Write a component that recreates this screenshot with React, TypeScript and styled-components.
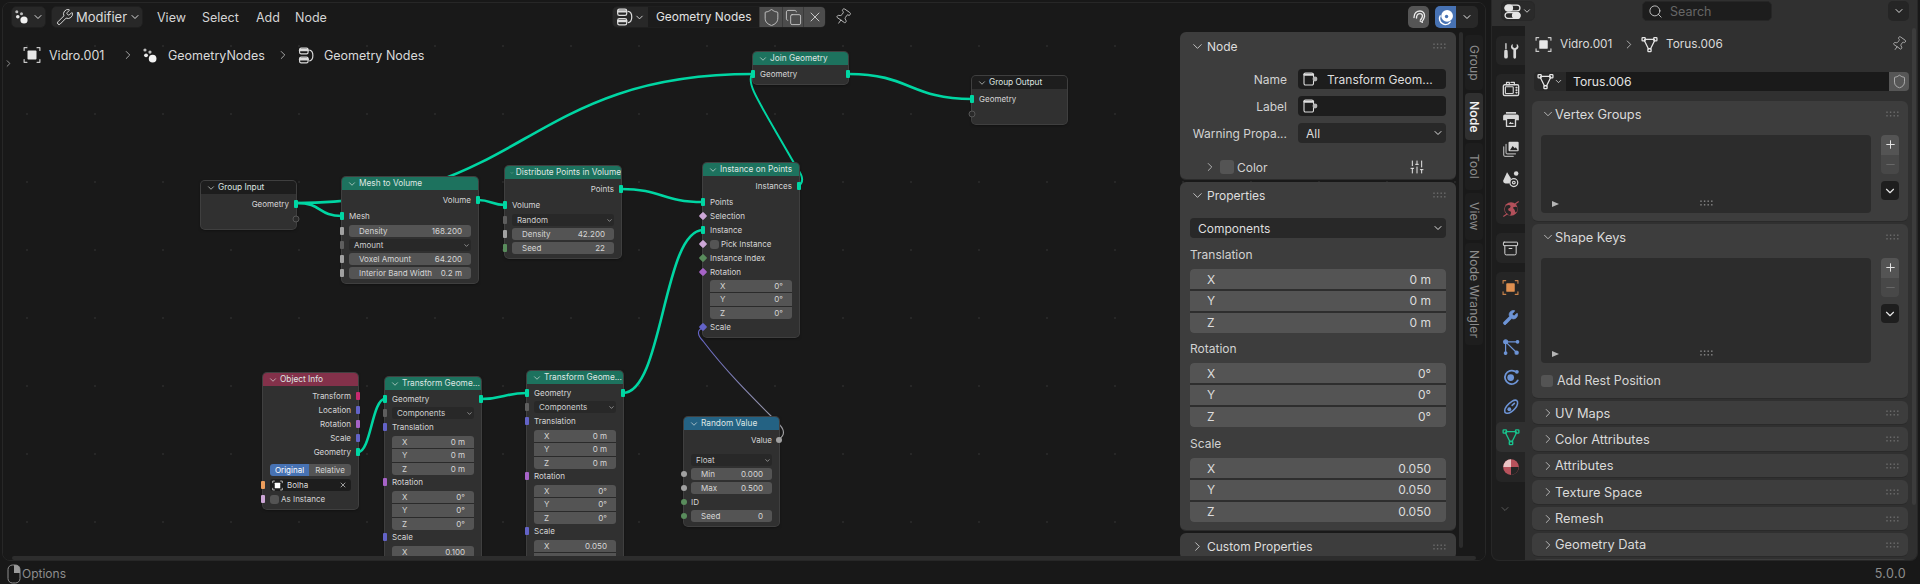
import React from 'react';
import styled, { createGlobalStyle } from 'styled-components';
import { Archive, ChevronDown, ChevronRight, Copy, Minus, Pin, Plus, Search, Shield, SlidersVertical, Wrench, X } from 'lucide-react';

const GlobalStyle = createGlobalStyle`
  html, body { margin: 0; padding: 0; background: #181818; overflow: hidden; }
  * { box-sizing: border-box; }
  #root { width: 1920px; height: 584px; font-family: Inter, "Liberation Sans", sans-serif; }
`;

const GEO = '#00d6a3', GRAY = '#a1a1a1', MENU = '#5e5e5e', INT = '#598c5c', VEC = '#6363c7', ROT = '#a663c7', BOOL = '#cca6d6', OBJ = '#ed9e5c', MATRIX = '#c7296f';
const OX = 3, OY = 3;

/* ---------- page ---------- */
const Page = styled.div`width: 1920px; height: 584px; display: flex; flex-direction: column; background: #181818; color: #d8d8d8; font-size: 12px;`;
const Main = styled.div`height: 561px; display: flex; gap: 5px; padding: 0 2px;`;
const Editor = styled.div`position: relative; width: 1484px; margin-top: 2px; border: 1px solid #272727; border-radius: 8px; overflow: hidden; background: #191919; display: flex; flex-direction: column;`;
const Canvas = styled.div`
  position: absolute; inset: 0; overflow: hidden;
  background-color: #191919;
  background-image: radial-gradient(circle, #272727 0.9px, transparent 1.2px);
  background-size: 68px 68px;
  background-position: -10px 9px;
`;
const Wires = styled.svg`position: absolute; left: 0; top: 0; width: 1484px; height: 560px; overflow: visible;`;
const HScroll = styled.div`position: absolute; left: 9px; right: 9px; bottom: 0; height: 4px; border-radius: 2px; background: #2d2d2d;`;
const SideArrow = styled.div`position: absolute; left: 0; top: 30px; color: #9a9a9a; display: flex;`;

/* ---------- editor header ---------- */
const HeaderBar = styled.div`position: relative; height: 25px; padding: 3px 7px 0 8px; display: flex; align-items: stretch;`;
const LeftGroup = styled.div`width: 601px; display: flex; align-items: center; gap: 5px;`;
const EditorButton = styled.div`
  width: 35px; height: 22px; border-radius: 5px; background: #282828;
  border: 1px solid #1f1f1f; display: flex; align-items: center; justify-content: center; gap: 2px; color: #dcdcdc;
`;
const ModeButton = styled.div`
  width: 92px; height: 22px; border-radius: 5px; background: #282828; padding: 0 1px 0 4px;
  border: 1px solid #1f1f1f; display: flex; align-items: center; justify-content: space-between; color: #dcdcdc; font-size: 13px;
`;
const Menu = styled.div`display: flex; margin-left: 9px; font-size: 12.5px; color: #d4d4d4;`;
const MenuItem = styled.span<{ $w: number }>`display: block; width: ${p => p.$w}px;`;
const DataBlock = styled.div`width: 214px; height: 22px; display: flex; border-radius: 5px; overflow: hidden; border: 1px solid #1f1f1f;`;
const DataIcon = styled.div`width: 35px; background: #282828; display: flex; align-items: center; justify-content: center; gap: 0; color: #dcdcdc;`;
const DataName = styled.div`flex: 1; background: #1c1c1c; padding-left: 8px; font-size: 11.9px; line-height: 20px; color: #e2e2e2; white-space: nowrap;`;
const DataAction = styled.div<{ $w: number }>`width: ${p => p.$w}px; background: #4c4c4c; display: flex; align-items: center; justify-content: center; color: #d0d0d0; border-left: 1px solid #3a3a3a;`;
const PinSlot = styled.div<{ $ml: number }>`margin-left: ${p => p.$ml}px; display: flex; align-items: center; color: #b8b8b8; svg { transform: rotate(35deg); }`;
const RightGroup = styled.div`margin-left: auto; display: flex; align-items: center; gap: 6px;`;
const Joined = styled.div`display: flex; border-radius: 5px; overflow: hidden; height: 22px;`;
const JoinedCell = styled.div<{ $w: number; $bg: string }>`width: ${p => p.$w}px; background: ${p => p.$bg}; display: flex; align-items: center; justify-content: center; color: #e8e8e8;`;

/* ---------- editor body ---------- */
const Body = styled.div`position: relative; flex: 1; display: flex; padding-right: 2px; min-height: 0;`;
const LeftCol = styled.div`flex: 1; padding: 17px 0 0 20px;`;
const Crumbs = styled.div`display: flex; align-items: center; height: 20px; font-size: 12.5px; color: #dadada; white-space: nowrap;`;
const CrumbText = styled.span<{ $w: number }>`display: block; width: ${p => p.$w}px;`;
const CrumbArrow = styled.span<{ $w: number }>`width: ${p => p.$w}px; display: flex; justify-content: center; color: #cfcfcf;`;
const CrumbIcon = styled.span<{ $w: number; $ml?: number }>`width: ${p => p.$w}px; margin-left: ${p => p.$ml ?? 0}px; display: flex;`;
const Sidebar = styled.div`display: flex; padding-top: 4px; height: 100%;`;
const Panels = styled.div`width: 276px; display: flex; flex-direction: column; gap: 2px;`;
const Panel = styled.section<{ $h: number }>`
  background: #3d3d3d; border-radius: 6px; flex: none; height: ${p => p.$h}px;
  padding: 0 10px; border-bottom: 1px solid #2b2b2b;
`;
const PanelHead = styled.div<{ $h: number }>`height: ${p => p.$h}px; display: flex; align-items: center; gap: 2px; font-size: 12px; color: #dedede;`;
const PanelGrip = styled.svg`margin-left: auto; width: 13px; height: 6px; color: #6e6e6e;`;
const ListGrip = styled.svg`width: 13px; height: 6px; color: #8a8a8a;`;
const PropGrid = styled.div`display: grid; grid-template-columns: 97px 148px; column-gap: 11px; row-gap: 7px; margin-top: 9px; align-items: center;`;
const PropLabel = styled.div`font-size: 12px; color: #d2d2d2; text-align: right; white-space: nowrap;`;
const TextField = styled.div`height: 20px; border-radius: 4px; background: #1d1d1d; display: flex; align-items: center; padding: 0 4px; gap: 9px; color: #dedede; font-size: 12px; white-space: nowrap;`;
const SelectField = styled.div<{ $mt?: number }>`height: 20px; margin-top: ${p => p.$mt ?? 0}px; border-radius: 4px; background: #282828; display: flex; align-items: center; justify-content: space-between; padding: 0 2px 0 8px; color: #dedede; font-size: 12px;`;
const ColorRow = styled.div`height: 16px; margin-top: 16px; padding-left: 13px; display: flex; align-items: center; gap: 3px; font-size: 12px; color: #d2d2d2;`;
const CheckBox = styled.span<{ $s: number }>`display: block; width: ${p => p.$s}px; height: ${p => p.$s}px; background: #545454; border-radius: 3px; flex: none;`;
const SliderSlot = styled.span`margin-left: auto; margin-right: 21px; display: flex; color: #e6e6e6;`;
const GroupLabel = styled.div<{ $mt: number }>`height: 14px; line-height: 14px; margin-top: ${p => p.$mt}px; font-size: 12px; color: #d2d2d2;`;
const VecField = styled.div`height: 64px; margin-top: 7px; display: flex; flex-direction: column; gap: 1.5px; border-radius: 4px; overflow: hidden; background: #2e2e2e;`;
const VecRow = styled.div`flex: 1; background: #545454; display: flex; align-items: center; justify-content: space-between; padding: 0 15px 0 17px; font-size: 12px; color: #dcdcdc;`;
const VScroll = styled.div<{ $h: number }>`width: 4px; height: ${p => p.$h}px; margin-left: 3px; border-radius: 2px; background: #2c2c2c;`;
const Tabs = styled.div`width: 18px; margin-left: 2px; display: flex; flex-direction: column; gap: 3px; padding-top: 3px;`;
const Tab = styled.div<{ $h: number; $on?: boolean }>`
  height: ${p => p.$h}px; border-radius: 4px; background: ${p => (p.$on ? '#303030' : '#1e1e1e')};
  writing-mode: vertical-rl; display: flex; align-items: center; justify-content: center;
  font-size: 12px; letter-spacing: .2px; white-space: nowrap; color: ${p => (p.$on ? '#f0f0f0' : '#8c8c8c')}; font-weight: ${p => (p.$on ? 600 : 400)};
`;

/* ---------- nodes ---------- */
const NodeBox = styled.div<{ $x: number; $y: number; $w: number }>`
  position: absolute; left: ${p => p.$x - OX}px; top: ${p => p.$y - OY}px; width: ${p => p.$w}px;
  background: #303030; border-radius: 4px; box-shadow: 0 0 0 1px #3f3f3f, 0 1px 3px rgba(0,0,0,.6);
  padding-bottom: 3px; font-size: 8px; color: #d6d6d6; line-height: 1;
`;
const NodeHead = styled.div<{ $c: string }>`
  height: 13px; margin-bottom: 3px; background: ${p => p.$c}; border-radius: 4px 4px 0 0; display: flex; align-items: center;
  gap: 2px; padding-left: 5px; color: #dfe6e3; white-space: nowrap; overflow: hidden; font-size: 8.3px;
`;
const Row = styled.div<{ $end?: boolean; $mt?: number }>`
  position: relative; height: 14px; margin-top: ${p => p.$mt ?? 0}px; padding: 0 7px; display: flex; align-items: center;
  justify-content: ${p => (p.$end ? 'flex-end' : 'flex-start')}; white-space: nowrap;
`;
const Socket = styled.i<{ $side: 'l' | 'r'; $shape: string; $c: string }>`
  position: absolute; top: 50%; ${p => (p.$side === 'l' ? 'left: 0;' : 'right: 0;')}
  width: ${p => (p.$shape === 'bar' ? 4 : p.$shape === 'ghost' ? 7 : 6)}px; height: ${p => (p.$shape === 'bar' ? 8 : p.$shape === 'ghost' ? 7 : 6)}px;
  transform: translate(${p => (p.$side === 'l' ? '-50%' : '50%')}, -50%) ${p => (p.$shape === 'dia' ? 'rotate(45deg)' : '')};
  background: ${p => (p.$shape === 'ghost' ? '#2a2a2a' : p.$c)};
  border-radius: ${p => (p.$shape === 'dot' || p.$shape === 'ghost' ? '50%' : '1px')};
  ${p => (p.$shape === 'ghost' ? 'border: 1px solid #555;' : '')}
`;
const NumField = styled.div`flex: 1; height: 12px; background: #545454; border-radius: 3px; display: flex; align-items: center; justify-content: space-between; padding: 0 9px 0 10px;`;
const MenuField = styled.div`flex: 1; height: 12px; background: #282828; border-radius: 3px; display: flex; align-items: center; justify-content: space-between; padding: 0 1px 0 5px; color: #cfcfcf;`;
const NodeVec = styled.div<{ $mt: number }>`margin: ${p => p.$mt}px 7px 0; display: flex; flex-direction: column; gap: 1px; background: #2a2a2a; border-radius: 3px; overflow: hidden;`;
const NodeVecRow = styled.div`height: 12.33px; background: #545454; display: flex; align-items: center; justify-content: space-between; padding: 0 9px 0 10px;`;
const Seg = styled.div`flex: 1; height: 12px; display: flex; border-radius: 3px; overflow: hidden;`;
const SegCell = styled.div<{ $on?: boolean }>`flex: ${p => (p.$on ? 39 : 42)}; background: ${p => (p.$on ? '#4772b3' : '#545454')}; display: flex; align-items: center; justify-content: center; color: ${p => (p.$on ? '#ffffff' : '#d6d6d6')};`;
const ObjField = styled.div`flex: 1; height: 12px; background: #1d1d1d; border-radius: 3px; display: flex; align-items: center; padding: 0 4px 0 2px; gap: 4px; color: #dedede;`;
const ObjClear = styled.span`margin-left: auto; display: flex;`;
const CheckLabel = styled.span`display: flex; align-items: center; gap: 2px;`;

/* ---------- properties editor ---------- */
const PropsEditor = styled.div`width: 427px; border: 1px solid #272727; border-top: none; border-radius: 0 0 8px 8px; overflow: hidden; background: #303030; display: flex; flex-direction: column; position: relative;`;
const PropsHeader = styled.div`height: 26px; flex: none; background: #303030; display: flex; align-items: center; padding: 0 8px 4px 9px;`;
const Switcher = styled.div`width: 34px; height: 20px; border-radius: 5px; background: #2a2a2a; border: 1px solid #282828; display: flex; align-items: center; justify-content: center; gap: 1px; color: #e6e6e6;`;
const SearchBox = styled.div`width: 130px; height: 20px; margin-left: 107px; border-radius: 5px; background: #1d1d1d; display: flex; align-items: center; gap: 7px; padding-left: 5px; font-size: 12.5px; color: #666; border: 1px solid #262626; svg { color: #d0d0d0; }`;
const PopBtn = styled.div`width: 21px; height: 20px; margin-left: auto; border-radius: 5px; background: #252525; display: flex; align-items: center; justify-content: center; color: #dcdcdc;`;
const PropsBody = styled.div`flex: 1; display: flex; min-height: 0;`;
const TabCol = styled.div`width: 33px; background: #1d1d1d; padding: 10px 0 0 4px; display: flex; flex-direction: column; gap: 9px;`;
const TabGroup = styled.div`background: #252525; border-radius: 5px 0 0 5px; display: flex; flex-direction: column;`;
const PropTab = styled.div<{ $h: number; $c: string; $on?: boolean }>`height: ${p => p.$h}px; display: flex; align-items: center; justify-content: center; color: ${p => p.$c}; background: ${p => (p.$on ? '#303030' : 'transparent')}; border-radius: 5px 0 0 5px;`;
const TabMore = styled.div`margin: 12px 0 0 3px; color: #5a5a5a; display: flex;`;
const PropsMain = styled.div`flex: 1; position: relative; padding: 8px 9px 0 7px; min-width: 0;`;
const PropsCrumbs = styled.div`height: 20px; display: flex; align-items: center; padding-left: 3px; font-size: 11.8px; color: #dadada;`;
const CrumbPin = styled.span`margin-left: auto; margin-right: 1px; display: flex; color: #b8b8b8; svg { transform: rotate(35deg); }`;
const NameBar = styled.div`height: 19px; margin: 18px -1px 0 2px; display: flex; border-radius: 4px; overflow: hidden;`;
const NameIcon = styled.div`width: 32px; background: #282828; display: flex; align-items: center; justify-content: center; color: #e6e6e6;`;
const NameField = styled.div`flex: 1; background: #1a1a1a; padding-left: 7px; font-size: 12.2px; line-height: 19px; color: #e2e2e2;`;
const NameShield = styled.div`width: 20px; background: #565656; display: flex; align-items: center; justify-content: center; color: #c6c6c6;`;
const PanelStack = styled.div`margin-top: 10px; display: flex; flex-direction: column; gap: 2px;`;
const DataPanel = styled.section<{ $h: number }>`height: ${p => p.$h}px; flex: none; background: #3d3d3d; border-radius: 6px; padding: 0 9px; border-bottom: 1px solid #2a2a2a; overflow: hidden;`;
const DataPanelHead = styled.div<{ $h: number }>`height: ${p => p.$h}px; display: flex; align-items: center; gap: 0; font-size: 12.8px; color: #dadada;`;
const ListWrap = styled.div`display: flex; gap: 10px; margin-top: 8px;`;
const ListBox = styled.div<{ $h: number }>`position: relative; width: 331px; height: ${p => p.$h}px; border-radius: 4px; background: #2c2c2c; display: flex; align-items: flex-end; justify-content: center; padding-bottom: 7px;`;
const ListTriangle = styled.span`position: absolute; left: 11px; bottom: 6px; width: 0; height: 0; border-left: 7px solid #b5b5b5; border-top: 3.5px solid transparent; border-bottom: 3.5px solid transparent;`;
const ListSide = styled.div`width: 18px; display: flex; flex-direction: column;`;
const ListBtn = styled.div<{ $dim?: boolean }>`height: 19.5px; background: ${p => (p.$dim ? '#484848' : '#545454')}; color: ${p => (p.$dim ? '#686868' : '#e6e6e6')}; display: flex; align-items: center; justify-content: center; border-radius: ${p => (p.$dim ? '0 0 4px 4px' : '4px 4px 0 0')};`;
const ListMenu = styled.div`height: 19px; margin-top: 7px; background: #1e1e1e; border-radius: 4px; display: flex; align-items: center; justify-content: center; color: #e6e6e6;`;
const RestRow = styled.div`margin-top: 10px; display: flex; align-items: center; gap: 4px; font-size: 12.5px; color: #d6d6d6;`;
const PScroll = styled.div`position: absolute; top: 2px; right: 1px; width: 4px; height: 477px; border-radius: 2px; background: #3c3c3c;`;

/* ---------- status ---------- */
const Status = styled.div`height: 23px; display: flex; align-items: center; justify-content: space-between; padding: 2px 14px 0 7px; font-size: 12px; color: #8e8e8e;`;
const StatusHint = styled.div`display: flex; align-items: center; gap: 1px;`;
const Version = styled.span`font-size: 12.5px; letter-spacing: .4px;`;

/* ---------- icons ---------- */
const Svg: React.FC<{ s?: number; children: React.ReactNode }> = ({ s = 16, children }) => (
  <svg width={s} height={s} viewBox="0 0 16 16" fill="none" stroke="currentColor" strokeWidth="1.1" strokeLinecap="round" strokeLinejoin="round">{children}</svg>
);
const GeoIcon: React.FC<{ s?: number }> = ({ s }) => (
  <Svg s={s}><g stroke="none"><circle cx="2.8" cy="2.8" r="1.5" fill="#bdbdbd" /><circle cx="7.5" cy="4.8" r="1.5" fill="#bdbdbd" /><circle cx="3.8" cy="7.8" r="1.8" fill="#e8e8e8" /><circle cx="10" cy="11" r="3.6" fill="#f2f2f2" /></g></Svg>
);
const ObjectIcon: React.FC<{ s?: number; c?: string }> = ({ s, c = '#e6e6e6' }) => (
  <Svg s={s}><g stroke={c} opacity=".85"><path d="M1 4V1.5h2.5M12.5 1.5H15V4M15 12v2.5h-2.5M3.5 14.5H1V12" /></g><rect x="4" y="4" width="8" height="8" rx=".8" fill={c} stroke="none" /></Svg>
);
const TreeIcon: React.FC<{ s?: number }> = ({ s }) => (
  <Svg s={s}><rect x="1.5" y="1" width="8" height="5.5" rx="1.5" /><path d="M2 3h7" strokeWidth="2.2" /><rect x="1.5" y="9.5" width="8" height="5.5" rx="1.5" /><path d="M2 11.5h7" strokeWidth="2.2" /><path d="M11 3c4 1 4 9 0 10" /></Svg>
);
const MeshIcon: React.FC<{ s?: number; c?: string }> = ({ s, c = '#e6e6e6' }) => (
  <Svg s={s}><g stroke={c} strokeWidth="1.2"><path d="M3.5 3.2h9M3 4l4.2 8.4M13 4l-4.2 8.4" /><rect x="1" y="1.6" width="3" height="3" rx=".6" /><rect x="12" y="1.6" width="3" height="3" rx=".6" /><rect x="6.5" y="11.8" width="3" height="3" rx=".6" /></g></Svg>
);
const NodeNameIcon: React.FC = () => (
  <Svg s={16}><path d="M10 2H3.5A1.5 1.5 0 0 0 2 3.5v9A1.5 1.5 0 0 0 3.5 14H10a1.5 1.5 0 0 0 1.5-1.5V4A2 2 0 0 0 10 2z" /><path d="M2.4 3.6h8.7" strokeWidth="2.2" /><circle cx="13" cy="8" r="2.4" fill="#b4b4b4" stroke="none" /></Svg>
);
const HookIcon: React.FC = () => (
  <Svg s={16}><path d="M3 8.5C3 4 6 2 9 2s5 2.5 4.5 5.5c-.3 2-1.3 3.4-2.3 4.8" strokeWidth="1.4" /><path d="M5.5 9C5.5 6 7 4.6 9 4.6s2.7 1.6 2.3 3.3c-.3 1.2-1 2-1.8 3.1" strokeWidth="1.4" /><path d="M9 12l2.5 1.5" /></Svg>
);
const OverlayIcon: React.FC = () => (
  <Svg s={17}><circle cx="9.5" cy="6.5" r="5.5" fill="#fff" stroke="none" /><circle cx="9" cy="7" r="1.6" fill="#4772b3" stroke="none" /><path d="M3 6.5a5.4 5.4 0 0 0 2.2 7.3 5.4 5.4 0 0 0 7.2-1.5" stroke="#fff" strokeWidth="1.4" /></Svg>
);
const ToggleIcon: React.FC = () => (
  <Svg s={17}><g strokeWidth="1.2"><rect x="1" y="2" width="14" height="5.4" rx="2.7" /><rect x="1" y="9" width="14" height="5.4" rx="2.7" /><rect x="1" y="2" width="7" height="5.4" rx="2.7" fill="currentColor" /><rect x="8" y="9" width="7" height="5.4" rx="2.7" fill="currentColor" /></g></Svg>
);
const MouseIcon: React.FC = () => (
  <svg width="14" height="20" viewBox="0 0 14 20" fill="none" stroke="#8e8e8e" strokeWidth="1"><rect x="1" y="1" width="12" height="18" rx="4.5" /><path d="M7 1h1.5A4.5 4.5 0 0 1 13 5.5V9H7z" fill="#9a9a9a" stroke="none" /></svg>
);
const GripDots = () => <g>{[1, 4.6, 8.2, 11.8].flatMap(x => [1.2, 4.8].map(y => <rect key={`${x}${y}`} x={x - .7} y={y - .7} width="1.4" height="1.4" />))}</g>;
const Grip: React.FC = () => <PanelGrip viewBox="0 0 13 6" fill="currentColor"><GripDots /></PanelGrip>;
const ListHandle: React.FC = () => <ListGrip viewBox="0 0 13 6" fill="currentColor"><GripDots /></ListGrip>;
const ToolTabIcon = () => (<Svg s={18}><path d="M3.5 1.5v4.2" strokeWidth="1.2" /><path d="M2 8.2a1.5 1.5 0 0 1 3 0l.2 4.8a1.6 1.6 0 0 1-3.3 0z" fill="currentColor" stroke="none" /><path d="M9.5 1.8v2.6l1.8 1.2 1.8-1.2V1.8c1.5.8 2 2.5 1.2 3.8-.4.7-1 1.1-1.8 1.3v6.7a1.2 1.2 0 0 1-2.4 0V6.9c-.8-.2-1.4-.6-1.8-1.3-.7-1.3-.2-3 1.2-3.8z" fill="currentColor" stroke="none" /></Svg>);
const RenderTabIcon = () => (<Svg s={18}><rect x="1.2" y="4.2" width="13.6" height="9.6" rx="1.2" strokeWidth="1.2" /><rect x="3" y="6" width="7" height="6" rx=".6" strokeWidth="1" /><path d="M4 2.2h2.5v2H4zM8 2.2h3v2" /><path d="M12.6 6.8h.6M12.6 9h.6M12.6 11.2h.6" strokeWidth="1.4" /></Svg>);
const OutputTabIcon = () => (<Svg s={18}><path d="M1 5.5A1.5 1.5 0 0 1 2.5 4h11A1.5 1.5 0 0 1 15 5.5V9H1z" fill="currentColor" stroke="none" /><rect x="3.5" y="1.8" width="9" height="1.5" fill="currentColor" stroke="none" /><rect x="4" y="7.5" width="8" height="7" fill="#252525" strokeWidth="1.2" /><path d="M6 12.5l1.5-2 1.3 1.3.7-.8 1 1.5z" fill="currentColor" stroke="none" /></Svg>);
const LayerTabIcon = () => (<Svg s={18}><path d="M1.5 6v7.2A1.3 1.3 0 0 0 2.8 14.5H10M3.6 3.8V11a1.3 1.3 0 0 0 1.3 1.3H12" opacity=".75" /><rect x="5.8" y="1.5" width="9" height="8.6" rx="1" fill="currentColor" stroke="none" /><path d="M7 9l2.5-3.6 1.8 2 1-1L14 9z" fill="#252525" stroke="none" /></Svg>);
const SceneTabIcon = () => (<Svg s={18}><path d="M4.5 2L1 9.5C1 11.5 2.5 12 4.5 12c1.2 0 1.8-.2 2.4-.5L8 7.5z" fill="currentColor" stroke="none" /><circle cx="12.6" cy="3.2" r="2" fill="currentColor" stroke="none" /><circle cx="10.5" cy="11.2" r="3.5" strokeWidth="1.1" /><circle cx="10.5" cy="11.2" r="1.2" /></Svg>);
const WorldTabIcon = () => (<Svg s={18}><circle cx="8" cy="8" r="6" fill="#b2505a" stroke="none" /><path d="M3.5 5.2C6 3.8 8 4.4 7.5 6.2c-.3 1.2-2 .8-2 2.2s2 1.2 2.4 2.2c.3.9-.2 2.2-.9 3.1C4.8 12.8 2.8 11 2.6 8.8 2.5 7.5 2.8 6.2 3.5 5.2zM10 6.5c1-.8 3-.9 3.8.3.2 1.8-.4 3.4-1.5 4.4-1-.6-.5-2-1.2-2.6-.6-.6-1.6-1.3-1.1-2.1z" fill="#252525" stroke="none" /><path d="M1.5 14.5l3-2M14.5 1.5l-3 2" stroke="#b2505a" strokeWidth="1" /></Svg>);
const ParticleTabIcon = () => (<Svg s={18}><g stroke="#6d94d6"><circle cx="3.2" cy="3.4" r="1.7" fill="#6d94d6" /><circle cx="13.8" cy="3.4" r="1.1" fill="#6d94d6" /><circle cx="3.2" cy="13.4" r="1.1" fill="#6d94d6" /><circle cx="13" cy="13" r="1.4" fill="#6d94d6" /><path d="M5 3.4h7.5M3.2 5v7.2M4.6 4.8l7.4 7.2" /></g></Svg>);
const PhysicsTabIcon = () => (<Svg s={18}><g stroke="#6d94d6"><path d="M11.5 3A6 6 0 1 0 14 11" strokeWidth="1.6" /><circle cx="7.7" cy="8.5" r="3" fill="#6d94d6" stroke="none" /><circle cx="13.2" cy="3.4" r="1.7" fill="#6d94d6" stroke="none" /></g></Svg>);
const ConstraintTabIcon = () => (<Svg s={18}><g stroke="#6d94d6" strokeWidth="1.4"><path d="M13 2.2c1.6 1.2 1 4.4-1.4 7.2-2.6 3-6 4.6-8 4-1.8-.6-1.6-3.4.6-6.2C6.8 4 11 1 13 2.2z" /><circle cx="6.5" cy="10" r="1.7" fill="#6d94d6" stroke="none" /><path d="M9 6.6l2-1.8" /></g></Svg>);
const MaterialTabIcon = () => (<Svg s={18}><circle cx="8" cy="8" r="7" fill="#b8525c" stroke="none" /><path d="M1.2 8H8V1.1A6.9 6.9 0 0 0 1.2 8z" fill="#f0d0d0" stroke="none" opacity=".9" /><path d="M8 8h6.8A6.9 6.9 0 0 1 8 15z" fill="#252525" stroke="none" /></Svg>);

/* ---------- node data ---------- */
type Sock = { side: 'l' | 'r'; shape: 'bar' | 'dot' | 'dia' | 'ghost'; c: string };
type RowDef =
  | { t: 'out' | 'in'; label: string; s?: Sock[]; mt?: number }
  | { t: 'ghost'; side: 'l' | 'r' }
  | { t: 'num'; label: string; value: string; s?: Sock[]; mt?: number }
  | { t: 'menu'; label: string; s?: Sock[]; mt?: number }
  | { t: 'vec'; v: string[]; mt: number }
  | { t: 'seg'; mt: number }
  | { t: 'obj'; s?: Sock[]; mt?: number }
  | { t: 'check'; label: string; s?: Sock[] };

const L = (c: string, shape: Sock['shape'] = 'bar'): Sock => ({ side: 'l', shape, c });
const R = (c: string, shape: Sock['shape'] = 'bar'): Sock => ({ side: 'r', shape, c });

type NodeDef = { title: string; c: string; x: number; y: number; w: number; rows: RowDef[] };
const GREEN = '#1d725e', DARK = '#1d1d1d';
const transformRows = (scale: string[]): RowDef[] => [
  { t: 'in', label: 'Geometry', s: [L(GEO), R(GEO)], mt: -1 },
  { t: 'menu', label: 'Components', s: [L(MENU)] },
  { t: 'in', label: 'Translation', s: [L(VEC)] },
  { t: 'vec', v: ['0 m', '0 m', '0 m'], mt: 2 },
  { t: 'in', label: 'Rotation', s: [L(ROT)] },
  { t: 'vec', v: ['0°', '0°', '0°'], mt: 2 },
  { t: 'in', label: 'Scale', s: [L(VEC)] },
  { t: 'vec', v: scale, mt: 2 },
];
const NODES: NodeDef[] = [
  { title: 'Group Input', c: DARK, x: 201, y: 181, w: 95, rows: [
    { t: 'out', label: 'Geometry', s: [R(GEO)] }, { t: 'ghost', side: 'r' } ] },
  { title: 'Mesh to Volume', c: GREEN, x: 342, y: 177, w: 136, rows: [
    { t: 'out', label: 'Volume', s: [R(GEO)] },
    { t: 'in', label: 'Mesh', s: [L(GEO)], mt: 2 },
    { t: 'num', label: 'Density', value: '168.200', s: [L(GRAY)], mt: 1 },
    { t: 'menu', label: 'Amount', s: [L(MENU)] },
    { t: 'num', label: 'Voxel Amount', value: '64.200', s: [L(GRAY)] },
    { t: 'num', label: 'Interior Band Width', value: '0.2 m', s: [L(GRAY)] } ] },
  { title: 'Distribute Points in Volume', c: GREEN, x: 505, y: 166, w: 116, rows: [
    { t: 'out', label: 'Points', s: [R(GEO)] },
    { t: 'in', label: 'Volume', s: [L(GEO)], mt: 2 },
    { t: 'menu', label: 'Random', s: [L(MENU)], mt: 1 },
    { t: 'num', label: 'Density', value: '42.200', s: [L(GRAY)] },
    { t: 'num', label: 'Seed', value: '22', s: [L(INT)] } ] },
  { title: 'Join Geometry', c: GREEN, x: 753, y: 52, w: 95, rows: [
    { t: 'in', label: 'Geometry', s: [L(GEO), R(GEO)], mt: -1 } ] },
  { title: 'Group Output', c: DARK, x: 972, y: 76, w: 95, rows: [
    { t: 'in', label: 'Geometry', s: [L(GEO)] }, { t: 'ghost', side: 'l' } ] },
  { title: 'Instance on Points', c: GREEN, x: 703, y: 163, w: 96, rows: [
    { t: 'out', label: 'Instances', s: [R(GEO)] },
    { t: 'in', label: 'Points', s: [L(GEO)], mt: 2 },
    { t: 'in', label: 'Selection', s: [L(BOOL, 'dia')] },
    { t: 'in', label: 'Instance', s: [L(GEO)] },
    { t: 'check', label: 'Pick Instance', s: [L(BOOL, 'dia')] },
    { t: 'in', label: 'Instance Index', s: [L(INT, 'dia')] },
    { t: 'in', label: 'Rotation', s: [L(ROT, 'dia')] },
    { t: 'vec', v: ['0°', '0°', '0°'], mt: 1 },
    { t: 'in', label: 'Scale', s: [L(VEC, 'dia')], mt: 1 } ] },
  { title: 'Random Value', c: '#246283', x: 684, y: 417, w: 95, rows: [
    { t: 'out', label: 'Value', s: [R(GRAY, 'dot')] },
    { t: 'menu', label: 'Float', mt: 6 },
    { t: 'num', label: 'Min', value: '0.000', s: [L(GRAY, 'dot')] },
    { t: 'num', label: 'Max', value: '0.500', s: [L(GRAY, 'dot')] },
    { t: 'in', label: 'ID', s: [L(INT, 'dot')] },
    { t: 'num', label: 'Seed', value: '0', s: [L(INT, 'dot')] } ] },
  { title: 'Object Info', c: '#83314a', x: 263, y: 373, w: 95, rows: [
    { t: 'out', label: 'Transform', s: [R(MATRIX)] },
    { t: 'out', label: 'Location', s: [R(VEC)] },
    { t: 'out', label: 'Rotation', s: [R(ROT)] },
    { t: 'out', label: 'Scale', s: [R(VEC)] },
    { t: 'out', label: 'Geometry', s: [R(GEO)] },
    { t: 'seg', mt: 4 },
    { t: 'obj', s: [L(OBJ)], mt: 1 },
    { t: 'check', label: 'As Instance', s: [L(BOOL)] } ] },
  { title: 'Transform Geome...', c: GREEN, x: 385, y: 377, w: 96, rows: transformRows(['0.100']) },
  { title: 'Transform Geome...', c: GREEN, x: 527, y: 371, w: 96, rows: transformRows(['0.050', '0.050']) },
];

const Sockets: React.FC<{ s?: Sock[] }> = ({ s }) => <>{s?.map((k, i) => <Socket key={i} $side={k.side} $shape={k.shape} $c={k.c} />)}</>;
const AXES = ['X', 'Y', 'Z'];

const NodeRow: React.FC<{ r: RowDef }> = ({ r }) => {
  switch (r.t) {
    case 'out': return <Row $end $mt={r.mt}>{r.label}<Sockets s={r.s} /></Row>;
    case 'in': return <Row $mt={r.mt}>{r.label}<Sockets s={r.s} /></Row>;
    case 'ghost': return <Row $mt={1}><Socket $side={r.side} $shape="ghost" $c="" /></Row>;
    case 'num': return <Row $mt={r.mt}><NumField><span>{r.label}</span><span>{r.value}</span></NumField><Sockets s={r.s} /></Row>;
    case 'menu': return <Row $mt={r.mt}><MenuField><span>{r.label}</span><ChevronDown size={7} strokeWidth={2} /></MenuField><Sockets s={r.s} /></Row>;
    case 'vec': return <NodeVec $mt={r.mt}>{r.v.map((v, i) => <NodeVecRow key={i}><span>{AXES[i]}</span><span>{v}</span></NodeVecRow>)}</NodeVec>;
    case 'seg': return <Row $mt={r.mt}><Seg><SegCell $on>Original</SegCell><SegCell>Relative</SegCell></Seg></Row>;
    case 'obj': return <Row $mt={r.mt}><ObjField><ObjectIcon s={11} c="#ffffff" /><span>Bolha</span><ObjClear><X size={8} /></ObjClear></ObjField><Sockets s={r.s} /></Row>;
    case 'check': return <Row><CheckLabel><CheckBox $s={9} />{r.label}</CheckLabel><Sockets s={r.s} /></Row>;
  }
};

const GraphNode: React.FC<{ n: NodeDef }> = ({ n }) => (
  <NodeBox $x={n.x} $y={n.y} $w={n.w}>
    <NodeHead $c={n.c}><ChevronDown size={10} strokeWidth={1.6} />{n.title}</NodeHead>
    {n.rows.map((r, i) => <NodeRow key={i} r={r} />)}
  </NodeBox>
);

const LINKS = [
  'M297 203C525 203 525 74 753 74',
  'M297 203C322 203 318 216 342 216',
  'M478 200C491 200 492 205 505 205',
  'M621 189C662 189 662 202 703 202',
  'M849 74C910 74 910 99 972 99',
  'M623 393C663 393 663 230 703 230',
  'M358 452C371 452 372 399 385 399',
  'M481 399C504 399 504 393 527 393',
];

const VecBlock: React.FC<{ v: string[] }> = ({ v }) => (
  <VecField>{v.map((val, i) => <VecRow key={i}><span>{AXES[i]}</span><span>{val}</span></VecRow>)}</VecField>
);

const COLLAPSED = ['UV Maps', 'Color Attributes', 'Attributes', 'Texture Space', 'Remesh', 'Geometry Data'];

export default function App() {
  return (
    <Page>
      <GlobalStyle />
      <Main>
        <Editor>
          <Canvas>
            <Wires>
              <defs>
                <linearGradient id="val" gradientUnits="userSpaceOnUse" x1="703" y1="328" x2="779" y2="439">
                  <stop offset="0" stopColor="#6363c7" />
                  <stop offset="1" stopColor="#a1a1a1" />
                </linearGradient>
              </defs>
              <g transform={`translate(${-OX} ${-OY})`} fill="none">
                {LINKS.map(d => <path key={d} d={d} stroke={GEO} strokeWidth="2.6" />)}
                <path d="M752 74C746 84 758 100 794 163C800 172 806 180 799 186" stroke={GEO} strokeWidth="2" />
                <path d="M703 328C696 330 698 336 703 341C725 370 750 395 772 417C778 423 790 432 779 439" stroke="url(#val)" strokeWidth="1.1" />
              </g>
            </Wires>
            {NODES.map((n, i) => <GraphNode key={i} n={n} />)}
          </Canvas>
          <HeaderBar>
            <LeftGroup>
              <EditorButton><GeoIcon s={16} /><ChevronDown size={12} /></EditorButton>
              <ModeButton><Wrench size={18} strokeWidth={1.3} />Modifier<ChevronDown size={12} /></ModeButton>
              <Menu>
                <MenuItem $w={45}>View</MenuItem>
                <MenuItem $w={54}>Select</MenuItem>
                <MenuItem $w={39}>Add</MenuItem>
                <MenuItem $w={40}>Node</MenuItem>
              </Menu>
            </LeftGroup>
            <DataBlock>
              <DataIcon><TreeIcon s={18} /><ChevronDown size={11} /></DataIcon>
              <DataName>Geometry Nodes</DataName>
              <DataAction $w={23}><Shield size={19} strokeWidth={1.1} /></DataAction>
              <DataAction $w={21}><Copy size={17} strokeWidth={1.2} /></DataAction>
              <DataAction $w={22}><X size={16} strokeWidth={1.4} /></DataAction>
            </DataBlock>
            <PinSlot $ml={8}><Pin size={18} strokeWidth={1.2} /></PinSlot>
            <RightGroup>
              <Joined><JoinedCell $w={21} $bg="#555555"><HookIcon /></JoinedCell></Joined>
              <Joined>
                <JoinedCell $w={21} $bg="#4772b3"><OverlayIcon /></JoinedCell>
                <JoinedCell $w={22} $bg="#282828"><ChevronDown size={12} /></JoinedCell>
              </Joined>
            </RightGroup>
          </HeaderBar>
          <Body>
            <SideArrow><ChevronRight size={11} /></SideArrow>
            <LeftCol>
              <Crumbs>
                <CrumbIcon $w={26}><ObjectIcon s={18} /></CrumbIcon>
                <CrumbText $w={72}>Vidro.001</CrumbText>
                <CrumbArrow $w={14}><ChevronRight size={18} strokeWidth={1.3} /></CrumbArrow>
                <CrumbIcon $w={26} $ml={7}><GeoIcon s={17} /></CrumbIcon>
                <CrumbText $w={108}>GeometryNodes</CrumbText>
                <CrumbArrow $w={14}><ChevronRight size={18} strokeWidth={1.3} /></CrumbArrow>
                <CrumbIcon $w={26} $ml={8}><TreeIcon s={17} /></CrumbIcon>
                <CrumbText $w={100}>Geometry Nodes</CrumbText>
              </Crumbs>
            </LeftCol>
            <Sidebar>
              <Panels>
                <Panel $h={148}>
                  <PanelHead $h={28}><ChevronDown size={15} strokeWidth={1.3} />Node<Grip /></PanelHead>
                  <PropGrid>
                    <PropLabel>Name</PropLabel>
                    <TextField><NodeNameIcon /><span>Transform Geom...</span></TextField>
                    <PropLabel>Label</PropLabel>
                    <TextField><NodeNameIcon /></TextField>
                    <PropLabel>Warning Propa...</PropLabel>
                    <SelectField>All<ChevronDown size={12} /></SelectField>
                  </PropGrid>
                  <ColorRow><ChevronRight size={14} strokeWidth={1.3} /><CheckBox $s={14} />Color<SliderSlot><SlidersVertical size={16} strokeWidth={1.5} /></SliderSlot></ColorRow>
                </Panel>
                <Panel $h={349}>
                  <PanelHead $h={26}><ChevronDown size={15} strokeWidth={1.3} />Properties<Grip /></PanelHead>
                  <SelectField $mt={10}>Components<ChevronDown size={12} /></SelectField>
                  <GroupLabel $mt={10}>Translation</GroupLabel>
                  <VecBlock v={['0 m', '0 m', '0 m']} />
                  <GroupLabel $mt={9}>Rotation</GroupLabel>
                  <VecBlock v={['0°', '0°', '0°']} />
                  <GroupLabel $mt={10}>Scale</GroupLabel>
                  <VecBlock v={['0.050', '0.050', '0.050']} />
                </Panel>
                <Panel $h={27}>
                  <PanelHead $h={27}><ChevronRight size={15} strokeWidth={1.3} />Custom Properties<Grip /></PanelHead>
                </Panel>
              </Panels>
              <VScroll $h={516} />
              <Tabs>
                <Tab $h={55}>Group</Tab>
                <Tab $h={47} $on>Node</Tab>
                <Tab $h={47}>Tool</Tab>
                <Tab $h={47}>View</Tab>
                <Tab $h={102}>Node Wrangler</Tab>
              </Tabs>
            </Sidebar>
          </Body>
          <HScroll />
        </Editor>

        <PropsEditor>
          <PropsHeader>
            <Switcher><ToggleIcon /><ChevronDown size={10} /></Switcher>
            <SearchBox><Search size={15} strokeWidth={1.4} />Search</SearchBox>
            <PopBtn><ChevronDown size={12} /></PopBtn>
          </PropsHeader>
          <PropsBody>
            <TabCol>
              <TabGroup><PropTab $h={29} $c="#d8d8d8"><ToolTabIcon /></PropTab></TabGroup>
              <TabGroup>
                <PropTab $h={30} $c="#d8d8d8"><RenderTabIcon /></PropTab>
                <PropTab $h={30} $c="#d8d8d8"><OutputTabIcon /></PropTab>
                <PropTab $h={30} $c="#d8d8d8"><LayerTabIcon /></PropTab>
                <PropTab $h={30} $c="#d8d8d8"><SceneTabIcon /></PropTab>
                <PropTab $h={30} $c="#d8d8d8"><WorldTabIcon /></PropTab>
              </TabGroup>
              <TabGroup><PropTab $h={30} $c="#d8d8d8"><Archive size={17} strokeWidth={1.4} /></PropTab></TabGroup>
              <TabGroup>
                <PropTab $h={30} $c="#e09050"><ObjectIcon s={17} c="#e09050" /></PropTab>
                <PropTab $h={30} $c="#6d94d6"><Wrench size={17} fill="#6d94d6" strokeWidth={1} /></PropTab>
                <PropTab $h={30} $c="#6d94d6"><ParticleTabIcon /></PropTab>
                <PropTab $h={30} $c="#6d94d6"><PhysicsTabIcon /></PropTab>
                <PropTab $h={30} $c="#6d94d6"><ConstraintTabIcon /></PropTab>
                <PropTab $h={30} $c="#19c28d" $on><MeshIcon s={18} c="#19c28d" /></PropTab>
                <PropTab $h={30} $c="#b8525c"><MaterialTabIcon /></PropTab>
              </TabGroup>
              <TabMore><ChevronDown size={12} /></TabMore>
            </TabCol>
            <PropsMain>
              <PropsCrumbs>
                <CrumbIcon $w={25}><ObjectIcon s={17} /></CrumbIcon>
                <CrumbText $w={62}>Vidro.001</CrumbText>
                <CrumbArrow $w={14}><ChevronRight size={15} strokeWidth={1.3} /></CrumbArrow>
                <CrumbIcon $w={25} $ml={5}><MeshIcon s={17} /></CrumbIcon>
                <span>Torus.006</span>
                <CrumbPin><Pin size={16} strokeWidth={1.2} /></CrumbPin>
              </PropsCrumbs>
              <NameBar>
                <NameIcon><MeshIcon s={17} /><ChevronDown size={9} /></NameIcon>
                <NameField>Torus.006</NameField>
                <NameShield><Shield size={15} strokeWidth={1.2} /></NameShield>
              </NameBar>
              <PanelStack>
                <DataPanel $h={121}>
                  <DataPanelHead $h={26}><ChevronDown size={14} strokeWidth={1.3} />Vertex Groups<Grip /></DataPanelHead>
                  <ListWrap>
                    <ListBox $h={78}><ListTriangle /><ListHandle /></ListBox>
                    <ListSide>
                      <ListBtn><Plus size={13} strokeWidth={1.8} /></ListBtn>
                      <ListBtn $dim><Minus size={13} strokeWidth={1.8} /></ListBtn>
                      <ListMenu><ChevronDown size={14} /></ListMenu>
                    </ListSide>
                  </ListWrap>
                </DataPanel>
                <DataPanel $h={175}>
                  <DataPanelHead $h={26}><ChevronDown size={14} strokeWidth={1.3} />Shape Keys<Grip /></DataPanelHead>
                  <ListWrap>
                    <ListBox $h={105}><ListTriangle /><ListHandle /></ListBox>
                    <ListSide>
                      <ListBtn><Plus size={13} strokeWidth={1.8} /></ListBtn>
                      <ListBtn $dim><Minus size={13} strokeWidth={1.8} /></ListBtn>
                      <ListMenu><ChevronDown size={14} /></ListMenu>
                    </ListSide>
                  </ListWrap>
                  <RestRow><CheckBox $s={12} />Add Rest Position</RestRow>
                </DataPanel>
                {COLLAPSED.map(t => (
                  <DataPanel key={t} $h={24.4}>
                    <DataPanelHead $h={24}><ChevronRight size={14} strokeWidth={1.3} />{t}<Grip /></DataPanelHead>
                  </DataPanel>
                ))}
                <DataPanel $h={12} />
              </PanelStack>
              <PScroll />
            </PropsMain>
          </PropsBody>
        </PropsEditor>
      </Main>
      <Status>
        <StatusHint><MouseIcon />Options</StatusHint>
        <Version>5.0.0</Version>
      </Status>
    </Page>
  );
}
